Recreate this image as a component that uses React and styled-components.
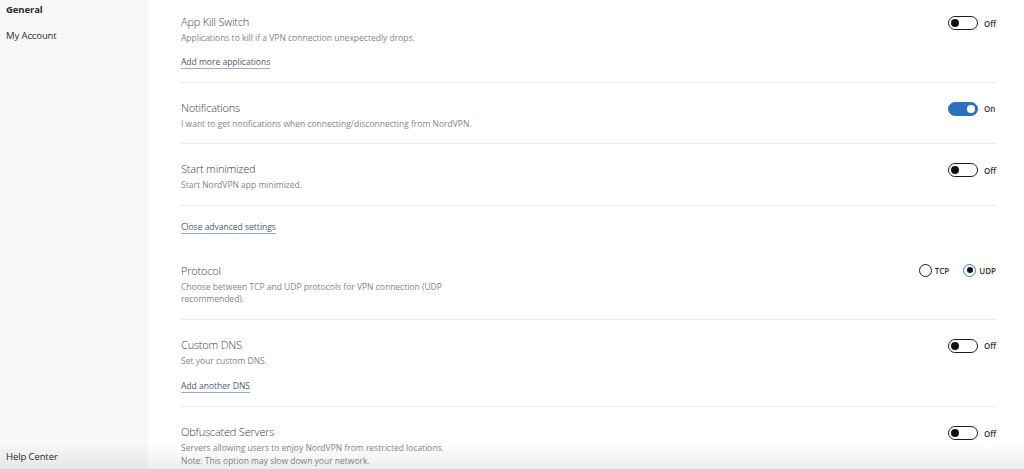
import React from "react";
import styled, { createGlobalStyle } from "styled-components";

const GlobalStyle = createGlobalStyle`
  html, body {
    margin: 0;
    padding: 0;
    background: #fff;
    font-family: "Open Sans", "Noto Sans", sans-serif;
    overflow: hidden;
  }
`;

const Window = styled.div`
  display: flex;
  width: 1024px;
  height: 469px;
  overflow: hidden;
  position: relative;
`;

const Sidebar = styled.nav`
  width: 148px;
  flex-shrink: 0;
  background: #f7f7f7;
  display: flex;
  flex-direction: column;
  justify-content: space-between;
  padding: 2px 0 5px 6px;
  box-sizing: border-box;
`;

const NavList = styled.div`
  display: flex;
  flex-direction: column;
  gap: 11px;
`;

const NavItem = styled.div`
  font-size: 9.5px;
  line-height: 15px;
  color: #2b2b2b;
  font-weight: ${(p) => (p.active ? 700 : 400)};
  letter-spacing: -0.1px;
`;

const Main = styled.main`
  flex: 1;
  padding: 0 28px 0 33px;
  display: flex;
  flex-direction: column;
`;

const Section = styled.section`
  display: flex;
  justify-content: space-between;
  align-items: flex-start;
  padding: ${(p) => (p.first ? "14px" : "17px")} 0 13px;
  border-bottom: ${(p) => (p.noLine ? "none" : "1px solid #ececec")};
`;

const Info = styled.div`
  display: flex;
  flex-direction: column;
`;

const Title = styled.div`
  font-size: 11px;
  line-height: 16px;
  font-weight: 300;
  color: #3c3c3c;
  letter-spacing: -0.2px;
`;

const Desc = styled.div`
  margin-top: 2px;
  font-size: 8.5px;
  line-height: 12.5px;
  color: #858585;
`;

const Link = styled.a`
  align-self: flex-start;
  margin-top: ${(p) => p.gap ?? 10}px;
  font-size: 8.5px;
  line-height: 13px;
  color: #4a5872;
  text-decoration: none;
  border-bottom: 1px solid #97acd0;
`;

const LinkRow = styled.div`
  padding: 14px 0 12px;
  display: flex;
`;

const Control = styled.div`
  display: flex;
  align-items: center;
  gap: 6px;
  padding-top: 2px;
`;

const Track = styled.span`
  width: 30px;
  height: 14px;
  box-sizing: border-box;
  border-radius: 7px;
  border: 1.5px solid ${(p) => (p.on ? "#2e6fbe" : "#1c1c1c")};
  background: ${(p) => (p.on ? "#2e6fbe" : "#fff")};
  display: flex;
  align-items: center;
  justify-content: ${(p) => (p.on ? "flex-end" : "flex-start")};
  padding: 0 2px;
`;

const Knob = styled.span`
  width: 8px;
  height: 8px;
  border-radius: 50%;
  background: ${(p) => (p.on ? "#fff" : "#111")};
`;

const StateLabel = styled.span`
  font-size: 8px;
  font-weight: 600;
  color: #333;
  width: 12px;
`;

const RadioGroup = styled.div`
  display: flex;
  gap: 14px;
  padding-top: 1px;
`;

const RadioOption = styled.label`
  display: flex;
  align-items: center;
  gap: 3px;
  font-size: 8px;
  font-weight: 600;
  color: #333;
`;

const RadioDot = styled.span`
  width: 13px;
  height: 13px;
  box-sizing: border-box;
  border-radius: 50%;
  border: 1.5px solid ${(p) => (p.checked ? "#3a78c8" : "#1c1c1c")};
  display: flex;
  align-items: center;
  justify-content: center;
  &::after {
    content: "";
    width: 6px;
    height: 6px;
    border-radius: 50%;
    background: ${(p) => (p.checked ? "#111" : "transparent")};
  }
`;

const BottomFade = styled.div`
  position: absolute;
  left: 0;
  right: 0;
  bottom: 0;
  height: 26px;
  background: linear-gradient(to bottom, rgba(0, 0, 0, 0), rgba(0, 0, 0, 0.07));
  pointer-events: none;
`;

const Toggle = ({ on }) => (
  <Control>
    <Track on={on}>
      <Knob on={on} />
    </Track>
    <StateLabel>{on ? "On" : "Off"}</StateLabel>
  </Control>
);

const settings = [
  {
    title: "App Kill Switch",
    desc: "Applications to kill if a VPN connection unexpectedly drops.",
    link: "Add more applications",
    on: false,
    first: true,
  },
  {
    title: "Notifications",
    desc: "I want to get notifications when connecting/disconnecting from NordVPN.",
    on: true,
  },
  {
    title: "Start minimized",
    desc: "Start NordVPN app minimized.",
    on: false,
  },
];

const advanced = [
  {
    title: "Custom DNS",
    desc: "Set your custom DNS.",
    link: "Add another DNS",
    linkGap: 12,
    on: false,
  },
  {
    title: "Obfuscated Servers",
    desc: (
      <>
        Servers allowing users to enjoy NordVPN from restricted locations.
        <br />
        Note: This option may slow down your network.
      </>
    ),
    on: false,
    noLine: true,
  },
];

const SettingRow = ({ item }) => (
  <Section first={item.first} noLine={item.noLine}>
    <Info>
      <Title>{item.title}</Title>
      <Desc>{item.desc}</Desc>
      {item.link && (
        <Link href="#" gap={item.linkGap}>
          {item.link}
        </Link>
      )}
    </Info>
    <Toggle on={item.on} />
  </Section>
);

export default function App() {
  return (
    <>
      <GlobalStyle />
      <Window>
        <Sidebar>
          <NavList>
            <NavItem active>General</NavItem>
            <NavItem>My Account</NavItem>
          </NavList>
          <NavItem>Help Center</NavItem>
        </Sidebar>
        <Main>
          {settings.map((s) => (
            <SettingRow key={s.title} item={s} />
          ))}
          <LinkRow>
            <Link href="#" gap={0}>
              Close advanced settings
            </Link>
          </LinkRow>
          <Section>
            <Info>
              <Title>Protocol</Title>
              <Desc>
                Choose between TCP and UDP protocols for VPN connection (UDP
                <br />
                recommended).
              </Desc>
            </Info>
            <RadioGroup>
              <RadioOption>
                <RadioDot />
                TCP
              </RadioOption>
              <RadioOption>
                <RadioDot checked />
                UDP
              </RadioOption>
            </RadioGroup>
          </Section>
          {advanced.map((s) => (
            <SettingRow key={s.title} item={s} />
          ))}
        </Main>
        <BottomFade />
      </Window>
    </>
  );
}
